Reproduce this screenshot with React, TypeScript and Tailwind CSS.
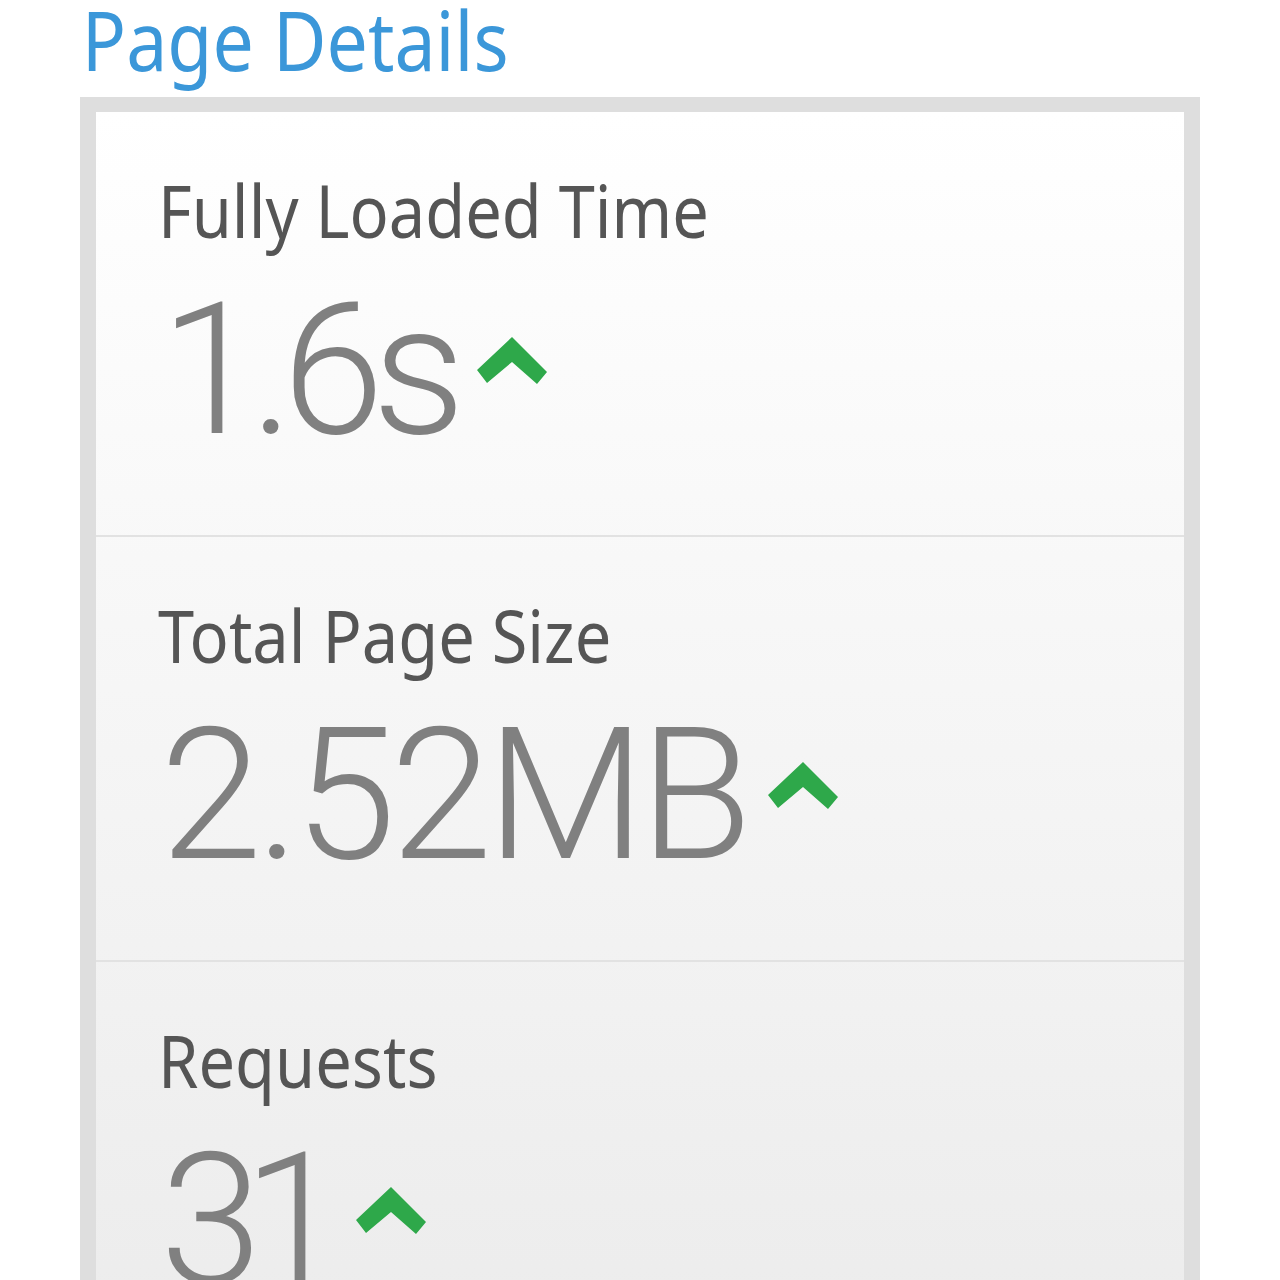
import React from "react";

function Chevron() {
  return (
    <svg width="70" height="47" viewBox="0 0 70 47" className="shrink-0">
      <polygon points="0,33 35,0 70,35 60,47 35,25 10,46" fill="#2ea84a" />
    </svg>
  );
}

function Stat({
  label,
  value,
  chevronGap,
  valueClass,
}: {
  label: string;
  value: string;
  chevronGap: number;
  valueClass: string;
}) {
  return (
    <div className="h-[423px] pl-[62px] pt-[53px]">
      <div
        className="text-[73px] leading-[90px] text-[#555555] origin-left scale-x-[0.89] whitespace-nowrap"
        style={{ fontFamily: '"Noto Sans", "Open Sans", sans-serif' }}
      >
        {label}
      </div>
      <div className="flex items-end mt-[15px] pl-[2px]">
        <span
          className={`text-[184px] leading-[200px] font-light text-[#808080] ${valueClass}`}
          style={{ fontFamily: 'Roboto, "Open Sans", sans-serif' }}
        >
          {value}
        </span>
        <div className="mb-[86px]" style={{ marginLeft: chevronGap }}>
          <Chevron />
        </div>
      </div>
    </div>
  );
}

export default function App() {
  return (
    <div className="w-[1280px] h-[1280px] overflow-hidden bg-white">
      <div className="pl-[80px] w-[1200px]">
        <div
          className="pl-[2px] mb-[19px] text-[82px] leading-[78px] text-[#3b97d9] origin-left scale-x-[0.895] whitespace-nowrap"
          style={{ fontFamily: '"Noto Sans", "Open Sans", sans-serif' }}
        >
          Page Details
        </div>
        <div className="border-[#dedede] border-l-[16px] border-r-[16px] border-t-[15px] bg-gradient-to-b from-[#ffffff] to-[#ebebeb] h-[1300px]">
          <Stat label="Fully Loaded Time" value="1.6s" chevronGap={24} valueClass="tracking-[-12px]" />
          <div className="h-[2px] bg-[#e2e2e2]" />
          <Stat label="Total Page Size" value="2.52MB" chevronGap={22} valueClass="tracking-[-6px]" />
          <div className="h-[2px] bg-[#e2e2e2]" />
          <Stat label="Requests" value="31" chevronGap={30} valueClass="tracking-[-19px]" />
        </div>
      </div>
    </div>
  );
}
